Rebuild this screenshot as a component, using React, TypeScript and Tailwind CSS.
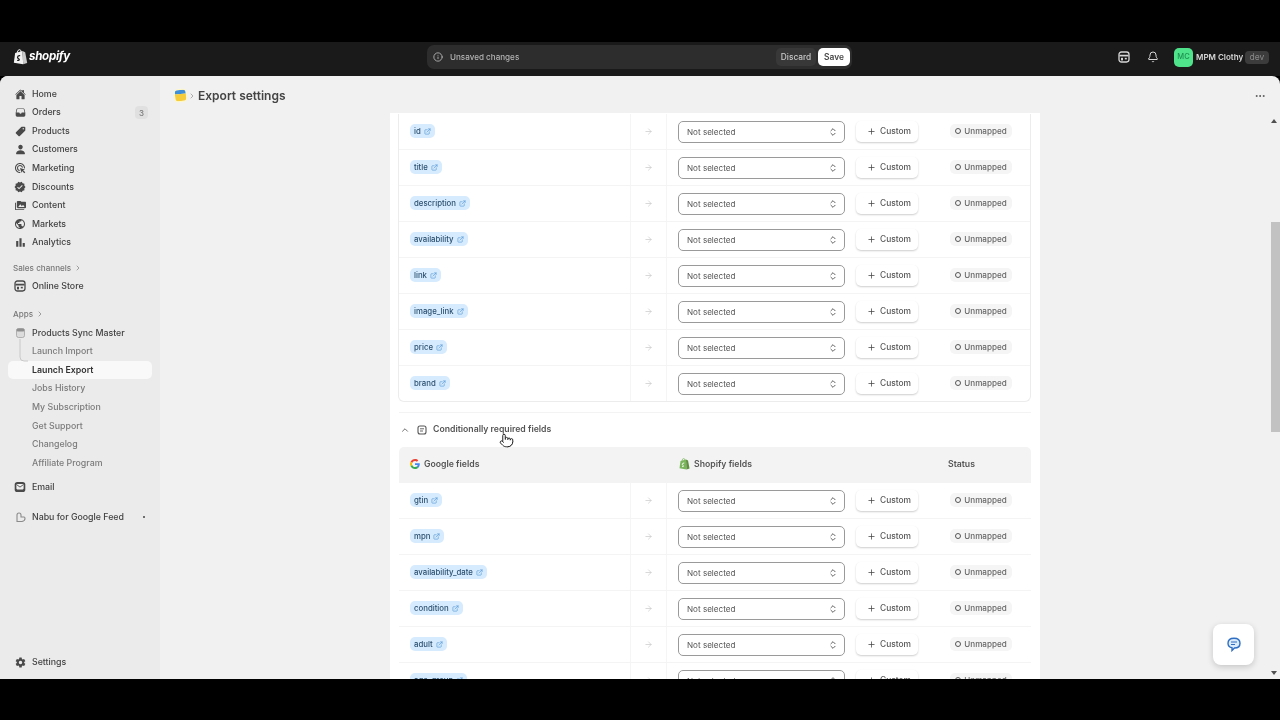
import { ArrowRight, ChevronsUpDown, ChevronRight, ChevronUp, ExternalLink, Plus, Info, Bell, Pointer, MoreHorizontal } from "lucide-react";
import { IoHome, IoFileTray, IoPricetag, IoPerson, IoSettingsSharp } from "react-icons/io5";
import { MdAdsClick, MdVerified, MdPermMedia, MdPublic, MdBarChart } from "react-icons/md";
import type { ReactNode } from "react";

const font = "font-['Inter','Liberation_Sans',sans-serif]";

function NavRow({ icon, label, tone = "main", extra, active }: { icon?: ReactNode; label: string; tone?: "main" | "sub" | "strong"; extra?: ReactNode; active?: boolean }) {
  const color = tone === "sub" ? "text-[#7b7b7b]" : "text-[#424242]";
  const bg = active ? "bg-[#f9f9f9] rounded-[5px]" : "";
  return (
    <div className={`ml-2 w-[144px] h-[18.6px] pl-1 pr-1 flex items-center text-[8.8px] font-medium leading-none ${color} ${bg}`}>
      <span className="w-4 mr-1 flex items-center justify-center text-[#4a4a4a] shrink-0">{icon}</span>
      <span className={active ? "font-semibold text-[#333333]" : ""}>{label}</span>
      {extra}
    </div>
  );
}

function SectionLabel({ label, className }: { label: string; className: string }) {
  return (
    <div className={`pl-[13px] h-[18.6px] flex items-center gap-[3px] text-[8.1px] text-[#777777] font-medium ${className}`}>
      {label}
      <ChevronRight size={8} strokeWidth={2} />
    </div>
  );
}

function StoreIcon({ color, size }: { color: string; size: number }) {
  return (
    <svg width={size} height={size} viewBox="0 0 12 12" fill="none">
      <rect x="1" y="1" width="10" height="10" rx="2.4" stroke={color} strokeWidth="1.3" />
      <path d="M1.500 4.600 H10.500" stroke={color} strokeWidth="1.700" />
      <rect x="3" y="6.800" width="2" height="2.600" fill={color} />
      <rect x="6.800" y="6.800" width="2" height="1.600" fill={color} />
    </svg>
  );
}

function MailIcon() {
  return (
    <svg width="12" height="12" viewBox="0 0 12 12">
      <rect x="0.700" y="1" width="10.600" height="10" rx="2.600" fill="#4a4a4a" />
      <rect x="2.400" y="3" width="7.200" height="5.400" rx="0.800" fill="#f0f0f0" />
      <path d="M2.600 3.600 L6 6.100 L9.400 3.600" stroke="#4a4a4a" strokeWidth="0.900" fill="none" />
    </svg>
  );
}

function Sidebar() {
  return (
    <aside className="w-[160px] shrink-0 bg-[#ebebeb] flex flex-col pt-[8.8px] pb-[7.7px] relative">
      <NavRow icon={<IoHome size={11} />} label="Home" />
      <NavRow
        icon={<IoFileTray size={11} />}
        label="Orders"
        extra={<span className="ml-auto w-[13px] h-[13px] rounded-[4px] bg-[#e0e0e0] text-[#777777] text-[8px] flex items-center justify-center">3</span>}
      />
      <NavRow icon={<IoPricetag size={11} />} label="Products" />
      <NavRow icon={<IoPerson size={11} />} label="Customers" />
      <NavRow icon={<MdAdsClick size={12} />} label="Marketing" />
      <NavRow icon={<MdVerified size={12} />} label="Discounts" />
      <NavRow icon={<MdPermMedia size={11} />} label="Content" />
      <NavRow icon={<MdPublic size={12} />} label="Markets" />
      <NavRow icon={<MdBarChart size={13} />} label="Analytics" />
      <SectionLabel label="Sales channels" className="mt-[6.4px]" />
      <NavRow icon={<StoreIcon color="#4a4a4a" size={12} />} label="Online Store" />
      <SectionLabel label="Apps" className="mt-[9.4px]" />
      <div className="relative">
        <NavRow
          icon={
            <svg width="9" height="10" viewBox="0 0 9 10">
              <rect x="0.5" y="0.5" width="8" height="9" rx="2" fill="#dcdcdc" stroke="#9a9a9a" strokeWidth="0.7" />
              <rect x="0.5" y="0.5" width="8" height="3" rx="1.5" fill="#8f8f8f" />
            </svg>
          }
          label="Products Sync Master"
        />
        <NavRow label="Launch Import" tone="sub" />
        <NavRow label="Launch Export" active />
        <svg className="absolute left-[19px] top-[15px]" width="10" height="24" viewBox="0 0 10 24" fill="none">
          <path d="M1 0 V18 Q1 22 5 22 H9" stroke="#c4c4c4" strokeWidth="0.9" />
        </svg>
        <NavRow label="Jobs History" tone="sub" />
        <NavRow label="My Subscription" tone="sub" />
        <NavRow label="Get Support" tone="sub" />
        <NavRow label="Changelog" tone="sub" />
        <NavRow label="Affiliate Program" tone="sub" />
      </div>
      <div className="mt-[5.4px]">
        <NavRow icon={<MailIcon />} label="Email" />
      </div>
      <div className="mt-[11.4px]">
        <NavRow
          icon={
            <svg width="11" height="11" viewBox="0 0 11 11" fill="none" stroke="#8a8a8a" strokeWidth="1.1">
              <path d="M2 9.5 V3 Q2 1 4 1 Q6 1 6 3 V5 H9 Q10 5 10 6.5 Q10 9 7 9.5 Z" />
            </svg>
          }
          label="Nabu for Google Feed"
          extra={<span className="ml-auto mr-[3px] w-[2.5px] h-[2.5px] rounded-full bg-[#444444]" />}
        />
      </div>
      <div className="mt-auto">
        <NavRow icon={<IoSettingsSharp size={11} />} label="Settings" />
      </div>
    </aside>
  );
}

function FieldRow({ name, last }: { name: string; last?: boolean }) {
  return (
    <div className={`flex items-stretch ${last ? "h-[35px]" : "h-[36px] border-b border-[#f4f4f4]"}`}>
      <div className="w-[232px] flex items-center pl-[11px] border-r border-[#f5f5f5]">
        <span className="h-[14px] pl-[4px] pr-[4px] rounded-[5px] bg-[#d6ebfd] text-[#2b4f70] text-[7.8px] leading-[14px] font-medium flex items-center gap-[3px] -mt-[1px]">
          {name}
          <ExternalLink size={7} className="text-[#4c93d4]" />
        </span>
      </div>
      <div className="w-[36px] flex items-center justify-center border-r border-[#f5f5f5] text-[#cccccc]">
        <ArrowRight size={9} />
      </div>
      <div className="flex-1 flex items-center pl-[11px]">
        <div className="w-[167px] h-[22px] mt-[1px] rounded-[5px] border border-[#9a9a9a] bg-white flex items-center justify-between pl-[8px] pr-[6px] text-[8.1px] text-[#555555]">
          Not selected
          <ChevronsUpDown size={10} className="text-[#444444]" />
        </div>
        <div className="ml-[11px] w-[62px] h-[21px] rounded-[5px] bg-white shadow-[0_1px_2px_rgba(0,0,0,0.2)] flex items-center pl-[11px] gap-[4px] text-[8.4px] font-medium text-[#555555]">
          <Plus size={9} className="text-[#444444]" />
          Custom
        </div>
        <div className="ml-[32px] w-[62px] h-[14px] -mt-[1px] rounded-[5px] bg-[#f5f5f5] flex items-center justify-center gap-[3px] text-[8.1px] font-medium text-[#666666]">
          <span className="w-[6px] h-[6px] rounded-full border border-[#555555]" />
          Unmapped
        </div>
      </div>
    </div>
  );
}

function GoogleG() {
  return (
    <svg width="10" height="10" viewBox="0 0 48 48">
      <path fill="#EA4335" d="M24 9.5c3.5 0 6.7 1.2 9.2 3.6l6.9-6.9C35.9 2.4 30.5 0 24 0 14.6 0 6.5 5.4 2.6 13.2l8 6.2C12.5 13.7 17.800 9.500 24 9.500z" />
      <path fill="#4285F4" d="M47 24.500c0-1.600-.1-3.100-.4-4.500H24v9h13c-.6 3-2.300 5.500-4.800 7.200l7.700 6C44.400 38.100 47 31.900 47 24.500z" />
      <path fill="#FBBC05" d="M10.600 28.600C10.100 27.100 9.800 25.600 9.800 24s.3-3.100.8-4.600l-8-6.200C.9 16.500 0 20.100 0 24s.9 7.500 2.600 10.800l8-6.200z" />
      <path fill="#34A853" d="M24 48c6.500 0 11.900-2.100 15.900-5.800l-7.700-6c-2.100 1.400-4.900 2.300-8.200 2.300-6.200 0-11.500-4.200-13.400-9.900l-8 6.200C6.500 42.600 14.600 48 24 48z" />
    </svg>
  );
}

function ShopBag({ body = "#7ab55c", dark = "#5e8e3e", clasp = "#ffffff", size = 11 }: { body?: string; dark?: string; clasp?: string; size?: number }) {
  return (
    <svg width={size} height={size + 1} viewBox="0 0 22 24">
      <path d="M3 6 L14 3 L15 23 L1 20.500 Z" fill={body} />
      <path d="M14 3 L18 5 L21 21 L15 23 Z" fill={dark} />
      <path d="M6 6 Q6.500 1 9.500 1 Q12 1 12 5" fill="none" stroke={body} strokeWidth="1.500" />
      <path d="M10.500 10 Q7 9.500 6.500 12.500 Q6.500 14 8.500 15 Q10 16 8.500 17 Q7.500 17.500 6 16.800" fill="none" stroke={clasp} strokeWidth="1.800" />
    </svg>
  );
}

const required = ["id", "title", "description", "availability", "link", "image_link", "price", "brand"];
const conditional = ["gtin", "mpn", "availability_date", "condition", "adult", "age_group"];

export default function App() {
  return (
    <div className={`h-screen w-[1280px] overflow-hidden bg-black flex flex-col relative blur-[0.35px] ${font}`}>
      <div className="h-[42px] shrink-0 bg-black" />
      <header className="h-[34px] shrink-0 bg-[#1a1a1a] flex items-center pb-[4px]">
        <div className="w-[427px] shrink-0 pl-[13px] flex items-center gap-[1px]">
          <ShopBag body="#f2f2f2" dark="#c9c9c9" clasp="#1a1a1a" size={15} />
          <span className="text-white text-[11.6px] font-bold italic tracking-[-0.3px]">shopify</span>
        </div>
        <div className="w-[425px] h-[24px] rounded-[7px] bg-[#2d2d2d] flex items-center pl-[6px] pr-[2px]">
          <Info size={10} className="text-[#bdbdbd]" />
          <span className="ml-[7px] text-[8.1px] font-medium text-[#b5b5b5]">Unsaved changes</span>
          <span className="ml-auto h-[18px] w-[40px] rounded-[5px] bg-[#383838] flex items-center justify-center text-[8.3px] font-medium text-[#c9c9c9]">Discard</span>
          <span className="ml-[2px] h-[18px] w-[32px] rounded-[5px] bg-white flex items-center justify-center text-[8.4px] font-semibold text-[#444444]">Save</span>
        </div>
        <div className="flex-1 flex items-center pl-[266px]">
          <StoreIcon color="#d6d6d6" size={12} />
          <Bell size={12} strokeWidth={2} className="ml-[17px] text-[#d6d6d6]" />
          <div className="ml-[15px] w-[19px] h-[19px] rounded-[5px] bg-[#4fe48c] text-[#1c8f4e] text-[7.5px] font-medium flex items-center justify-center">MC</div>
          <span className="ml-[3px] w-[46px] whitespace-nowrap text-[8px] font-semibold text-[#d9d9d9]">MPM Clothy</span>
          <span className="ml-[3px] w-[24px] h-[13px] rounded-[4px] bg-[#3c3c3c] text-[#8a8a8a] text-[8.5px] flex items-center justify-center">dev</span>
        </div>
      </header>
      <div className="h-[603px] shrink-0 flex rounded-t-[8px] overflow-hidden bg-[#f1f1f1] relative">
        <Sidebar />
        <main className="flex-1 min-w-0 flex flex-col">
          <div className="h-[37px] shrink-0 flex items-center pl-[15px] pr-[14px] pt-[2px]">
            <span className="w-[11px] h-[11px] rounded-[3px] overflow-hidden flex flex-col rotate-[-6deg] shadow-[0_0_0_1px_#fff7c2]">
              <span className="h-[4px] bg-[#3f8fd8]" />
              <span className="flex-1 bg-[#f5cd3c]" />
            </span>
            <ChevronRight size={8} className="ml-[2px] mr-[2px] text-[#8a8a8a]" />
            <h1 className="text-[12px] font-semibold text-[#444444]">Export settings</h1>
            <MoreHorizontal size={12} className="ml-auto text-[#555555]" />
          </div>
          <div className="flex-1 min-h-0 overflow-hidden flex justify-center pr-[10px]">
            <div className="w-[650px] h-max bg-white px-[9px] pt-[1px]">
              <div className="-ml-[1px] border-x border-b border-[#ececec] rounded-b-[6px]">
                {required.map((n, i) => (
                  <FieldRow key={n} name={n} last={i === required.length - 1} />
                ))}
              </div>
              <div className="mt-[10px] border-t border-[#f3f3f3] h-[35px] flex items-center pl-[1px]">
                <ChevronUp size={10} className="text-[#555555]" />
                <svg className="ml-[7px]" width="10" height="10" viewBox="0 0 10 10" fill="none" stroke="#555555">
                  <rect x="1" y="1" width="8" height="8" rx="2" strokeWidth="1.100" />
                  <path d="M3 3.800 H7 M3 6 H6" strokeWidth="0.900" />
                </svg>
                <span className="ml-[6px] text-[8.7px] font-semibold text-[#555555]">Conditionally required fields</span>
              </div>
              <div className="h-[36px] pb-[1px] bg-[#f3f3f3] rounded-t-[5px] flex items-center text-[8.7px] font-semibold text-[#555555]">
                <div className="w-[268px] pl-[11px] flex items-center gap-[4px]">
                  <GoogleG />
                  Google fields
                </div>
                <div className="w-[281px] pl-[12px] flex items-center gap-[4px]">
                  <ShopBag />
                  Shopify fields
                </div>
                <div>Status</div>
              </div>
              {conditional.map((n) => (
                <FieldRow key={n} name={n} />
              ))}
            </div>
          </div>
        </main>

        {/* overlay scrollbar */}
        <div className="absolute right-0 top-[146px] w-[9px] h-[210px] bg-[#c2c2c2]" />
        <span className="absolute right-[3px] top-[43px] w-0 h-0 border-x-[3px] border-x-transparent border-b-[4px] border-b-[#505050]" />
        <span className="absolute right-[3px] top-[595px] w-0 h-0 border-x-[3px] border-x-transparent border-t-[4px] border-t-[#505050]" />

        {/* chat launcher */}
        <div className="absolute left-[1213px] top-[548px] w-[41px] h-[41px] rounded-[8px] bg-white shadow-[0_2px_6px_rgba(0,0,0,0.18)] flex items-center justify-center">
          <svg width="14" height="15" viewBox="0 0 14 15" fill="none">
            <path d="M7 1.200 C10.500 1.200 13 3 13 6.200 C13 9.400 10.500 11 7.500 11 L5 13.500 L5 10.800 C2.800 10.300 1 8.800 1 6.200 C1 3 3.500 1.200 7 1.200 Z" stroke="#2e6fc4" strokeWidth="1.400" fill="#dcebfb" />
            <path d="M4 5 H10 M4 7.500 H8" stroke="#2e6fc4" strokeWidth="1.100" />
          </svg>
        </div>

        {/* mouse cursor */}
        <Pointer size={15} fill="#ffffff" className="absolute left-[499px] top-[357px] text-[#222222]" strokeWidth={1.6} />
      </div>
      <div className="flex-1 bg-black" />
    </div>
  );
}
